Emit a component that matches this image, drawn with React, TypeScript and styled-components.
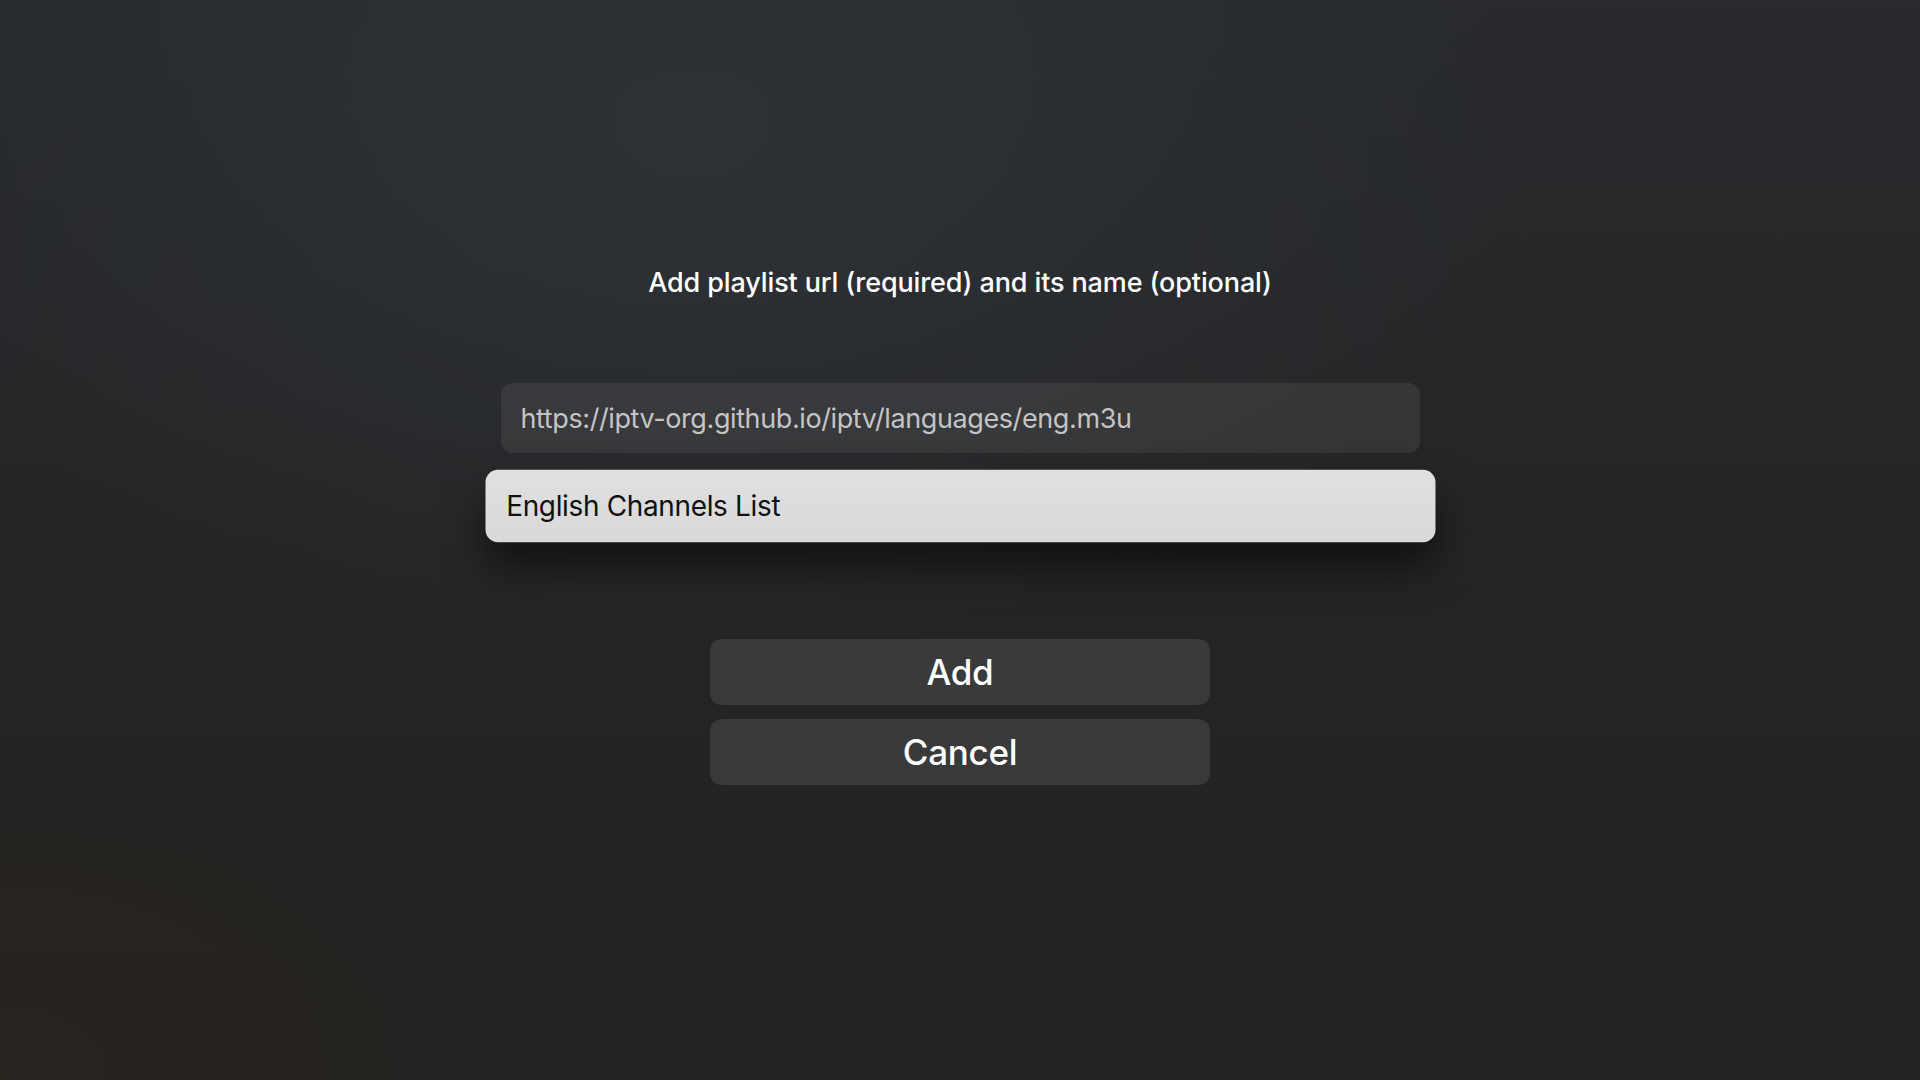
import React from "react";
import styled, { createGlobalStyle } from "styled-components";

const GlobalStyle = createGlobalStyle`
  html, body {
    margin: 0;
    padding: 0;
    width: 100%;
    height: 100%;
  }
  body {
    font-family: Inter, "Noto Sans", "Liberation Sans", sans-serif;
    background: #232323;
  }
  #root {
    min-height: 100vh;
  }
`;

const Screen = styled.div`
  width: 1920px;
  height: 1080px;
  box-sizing: border-box;
  overflow: hidden;
  display: flex;
  flex-direction: column;
  align-items: center;
  padding-top: 263px;
  background:
    radial-gradient(ellipse 900px 600px at 0% 100%, rgba(44, 36, 26, 0.55), rgba(44, 36, 26, 0) 70%),
    radial-gradient(ellipse 1100px 700px at 36% 12%, #2e3237 0%, rgba(46, 50, 55, 0) 75%),
    linear-gradient(180deg, #282a2d 0%, #242424 60%, #222222 100%);
`;

const Title = styled.h1`
  margin: 0;
  font-size: 27px;
  line-height: 40px;
  font-weight: 500;
  color: #ffffff;
  letter-spacing: -0.12px;
`;

const Fields = styled.div`
  margin-top: 80px;
  display: flex;
  flex-direction: column;
  gap: 18px;
`;

const Field = styled.div<{ $focused?: boolean }>`
  width: 919px;
  height: 70px;
  box-sizing: border-box;
  padding: 0 20px;
  display: flex;
  align-items: center;
  border-radius: 12px;
  font-size: 27px;
  letter-spacing: ${(p) => (p.$focused ? "-0.3px" : "-0.4px")};
  background: ${(p) => (p.$focused ? "linear-gradient(180deg, #e0e0e0, #d9d9d9)" : "rgba(255, 255, 255, 0.07)")};
  color: ${(p) => (p.$focused ? "#101010" : "#c4c4c6")};
  transform: ${(p) => (p.$focused ? "scale(1.0337)" : "none")};
  box-shadow: ${(p) => (p.$focused ? "0 24px 40px rgba(0, 0, 0, 0.55)" : "none")};
`;

const Buttons = styled.div`
  margin-top: 98px;
  display: flex;
  flex-direction: column;
  gap: 14px;
`;

const Button = styled.button`
  width: 500px;
  height: 66px;
  border: none;
  border-radius: 12px;
  background: rgba(255, 255, 255, 0.1);
  color: #ffffff;
  font-family: Inter, "Noto Sans", "Liberation Sans", sans-serif;
  font-size: 35px;
  font-weight: 500;
  letter-spacing: -0.3px;
  cursor: pointer;
`;

export default function App() {
  return (
    <>
      <GlobalStyle />
      <Screen>
        <Title>Add playlist url (required) and its name (optional)</Title>
        <Fields>
          <Field>https://iptv-org.github.io/iptv/languages/eng.m3u</Field>
          <Field $focused>English Channels List</Field>
        </Fields>
        <Buttons>
          <Button>Add</Button>
          <Button>Cancel</Button>
        </Buttons>
      </Screen>
    </>
  );
}
